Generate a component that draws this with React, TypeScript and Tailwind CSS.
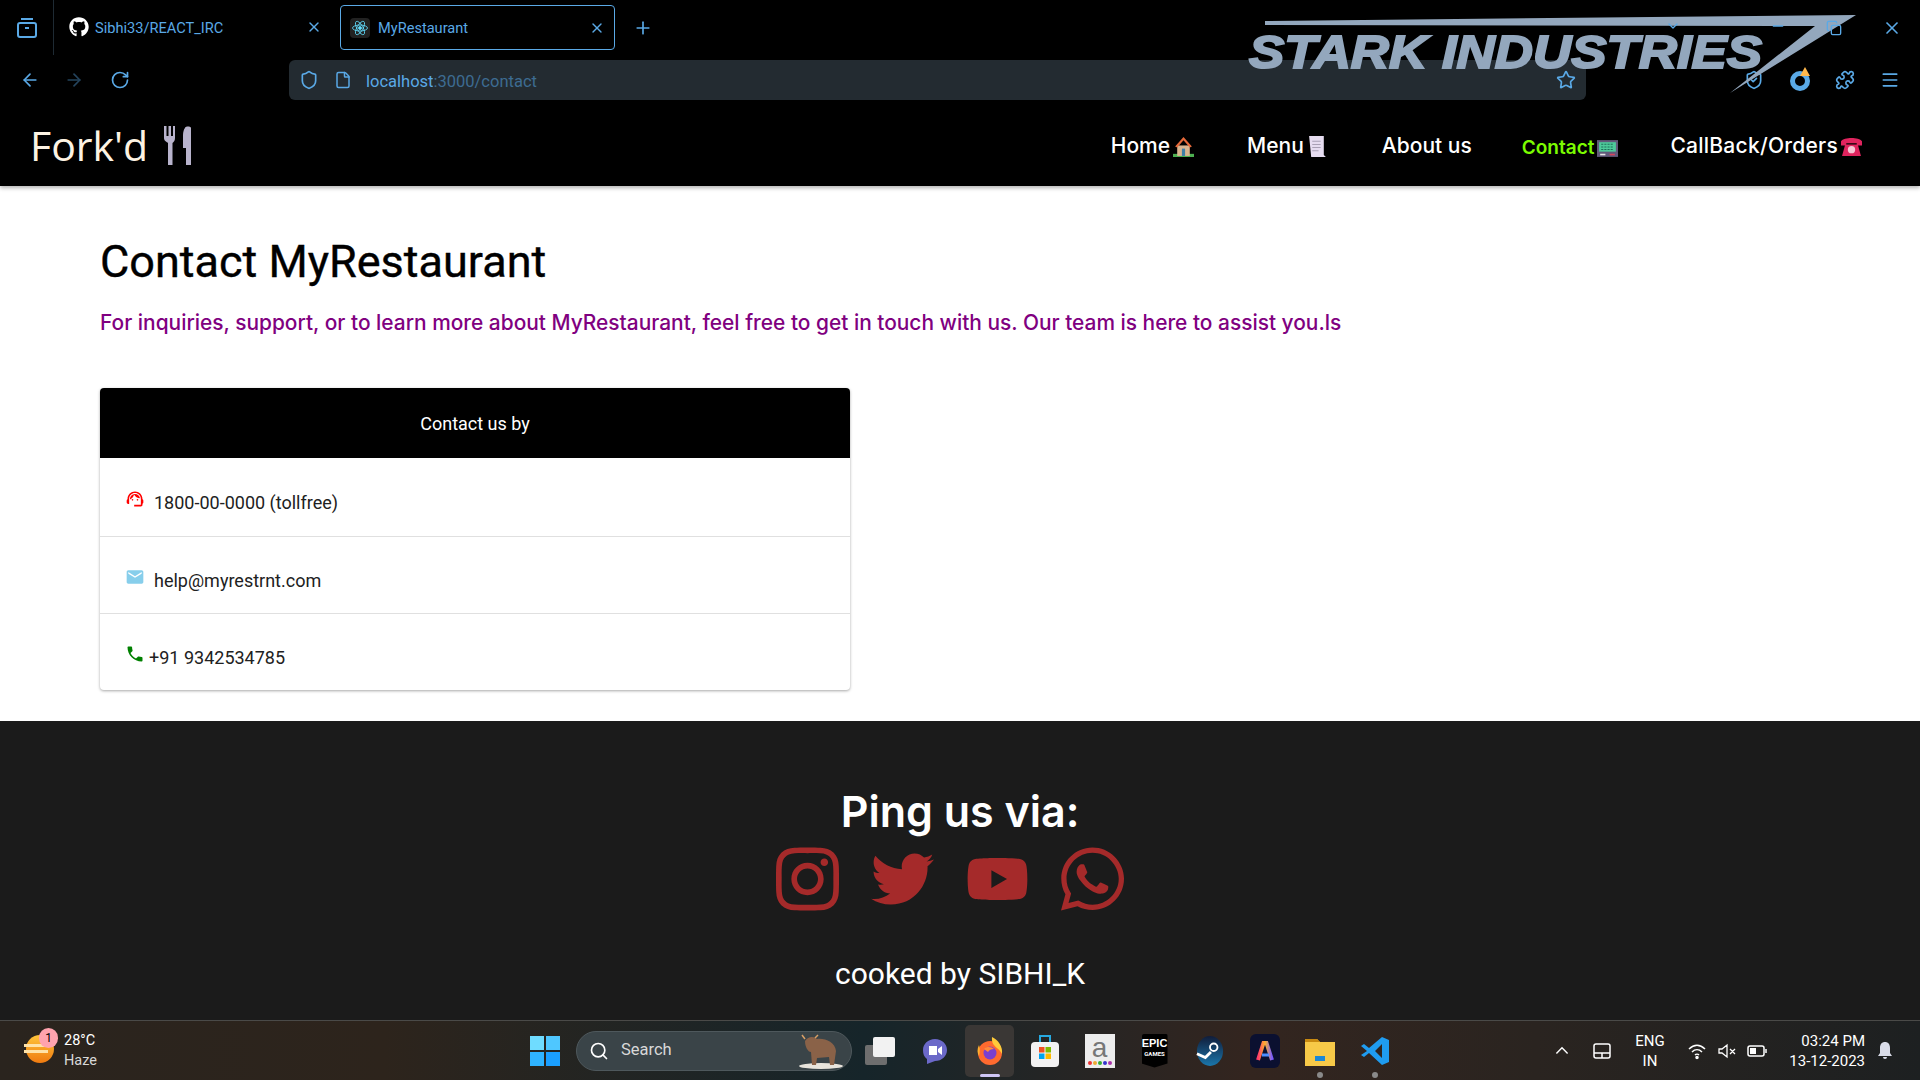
import { ArrowLeft, ArrowRight, ChevronDown, Copy, File, Menu, Minus, Plus, Puzzle, RotateCw, Search, Shield, ShieldCheck, Star, X } from "lucide-react";
import { FaGithub, FaInstagram, FaTwitter, FaWhatsapp, FaYoutube } from "react-icons/fa";

const poppins = "font-['Inter','Open_Sans',sans-serif]";

function ReactLogo() {
  return (
    <svg viewBox="0 0 24 24" className="w-5 h-5 bg-[#222] rounded-sm" fill="none" stroke="#61dafb" strokeWidth="1">
      <circle cx="12" cy="12" r="1.8" fill="#61dafb" />
      <ellipse cx="12" cy="12" rx="9" ry="3.6" />
      <ellipse cx="12" cy="12" rx="9" ry="3.6" transform="rotate(60 12 12)" />
      <ellipse cx="12" cy="12" rx="9" ry="3.6" transform="rotate(120 12 12)" />
    </svg>
  );
}

function HouseEmoji() {
  return (
    <svg viewBox="0 0 20 20" className="w-[21px] h-[21px]">
      <path d="M0 17h20v3H0z" fill="#4caf50" />
      <path d="M4 9h12v10H4z" fill="#d9b48f" />
      <path d="M10 1 2 10l2 1 6-7 6 7 2-1z" fill="#e5693a" />
      <path d="M8.500 12h3v7h-3z" fill="#3f7fa6" />
    </svg>
  );
}

function ScrollEmoji() {
  return (
    <svg viewBox="0 0 20 20" className="w-[21px] h-[21px]">
      <path d="M2 0h14v18l2 2H4z" fill="#e6dcf0" />
      <path d="M5 5h8M5 8h8M5 11h8M5 14h6" stroke="#a9a0b5" strokeWidth="1" />
    </svg>
  );
}

function ComputerEmoji() {
  return (
    <svg viewBox="0 0 20 20" className="w-[21px] h-[21px]">
      <path d="M0 2h20v16H0z" fill="#62597a" />
      <path d="M2 4h16v9H2z" fill="#4ecb9b" />
      <path d="M4 6h12M4 8.500h12M4 11h12" stroke="#1f6f5a" strokeWidth="1" strokeDasharray="2 1" />
      <path d="M3 15h5v1.500H3z" fill="#e8e8e8" />
      <path d="M12 15h5v1.500h-5z" fill="#d6455d" />
    </svg>
  );
}

function TelephoneEmoji() {
  return (
    <svg viewBox="0 0 20 20" className="w-[21px] h-[21px]">
      <path d="M0 5c3-4 17-4 20 0v4h-5V7H5v2H0z" fill="#e0245e" />
      <path d="M4 8h12l3 11H1z" fill="#e0245e" />
      <circle cx="10" cy="13" r="3.500" fill="#f7c6d5" />
    </svg>
  );
}

function NavLink({ label, emoji, className }: { label: string; emoji?: React.ReactNode; className?: string }) {
  return (
    <div className={`flex items-center gap-[3px] font-medium ${className ?? "text-white"}`}>
      <span>{label}</span>
      {emoji}
    </div>
  );
}

function ContactRow({ icon, text, last, gap, h }: { icon: React.ReactNode; text: string; last?: boolean; gap: string; h: string }) {
  return (
    <div className={`flex items-center pl-[26px] text-[#212121] text-[18px] ${h} ${gap} ${last ? "" : "border-b border-[#e0e0e0]"}`}>
      <span className="mt-1 w-[17px] h-[17px] flex items-center justify-center">{icon}</span>
      <span className="pt-[11px]">{text}</span>
    </div>
  );
}

function TrayApp({ children, dot }: { children: React.ReactNode; dot?: boolean }) {
  return (
    <div className="relative w-[55px] h-[60px] flex items-center justify-center">
      {children}
      {dot && <span className="absolute bottom-[3px] w-[6px] h-[6px] rounded-full bg-[#8a8a8a]" />}
    </div>
  );
}

export default function App() {
  return (
    <div className="relative w-[1920px] h-[1080px] overflow-hidden bg-white flex flex-col font-['Roboto',sans-serif]">
      {/* browser chrome */}
      <div className="bg-black h-[108px] flex flex-col text-[#5aa9e6]">
        <div className="h-[55px] flex items-center">
          <div className="w-[54px] h-[55px] flex items-center justify-center border-r border-[#1e2a33]">
            <svg viewBox="0 0 24 24" className="w-6 h-6" fill="none" stroke="currentColor" strokeWidth="2">
              <path d="M6 3h12" />
              <rect x="3" y="7" width="18" height="14" rx="2" />
              <path d="M10 12h4" />
            </svg>
          </div>
          <div className="w-[286px] flex items-center pl-[15px] pr-[18px] text-[14.6px]">
            <FaGithub className="text-white w-5 h-5 mr-[6px]" />
            <span className="pt-[3px]">Sibhi33/REACT_IRC</span>
            <X className="ml-auto w-4 h-4" />
          </div>
          <div className="w-[275px] h-[45px] flex items-center border border-[#5aa9e6] rounded-[4px] px-[9px] text-[14.6px]">
            <ReactLogo />
            <span className="ml-2 pt-[3px]">MyRestaurant</span>
            <X className="ml-auto w-4 h-4" />
          </div>
          <Plus className="w-5 h-5 ml-[18px]" />
        </div>
        <div className="h-[53px] pb-[3px] flex items-center">
          <ArrowLeft className="w-5 h-5 ml-[20px]" />
          <ArrowRight className="w-5 h-5 ml-[24px] opacity-40" />
          <RotateCw className="w-5 h-5 ml-[26px]" />
          <div className="ml-[159px] w-[1297px] h-10 bg-[#232b31] rounded-[6px] flex items-center px-[10px] text-[16.5px]">
            <Shield className="w-5 h-5" />
            <File className="w-[18px] h-[18px] ml-[15px]" />
            <span className="ml-[14px] pt-[4px]">localhost</span>
            <span className="pt-[4px] text-[#3d6c92]">:3000/contact</span>
            <Star className="w-5 h-5 ml-auto" />
          </div>
          <ShieldCheck className="w-5 h-5 absolute left-[1744px] top-[70px]" />
          <div className="absolute left-[1790px] top-[71px] w-5 h-5 rounded-full border-[5px] border-[#5aa9e6]">
            <span className="absolute -top-[9px] left-[5px] w-0 h-0 border-x-[5px] border-x-transparent border-b-[9px] border-b-[#ffb84d]" />
          </div>
          <Puzzle className="w-5 h-5 absolute left-[1835px] top-[70px]" />
          <Menu className="w-5 h-5 absolute left-[1880px] top-[70px]" />
        </div>
      </div>

      {/* logo sticker over the chrome */}
      <div className="absolute left-[1249px] top-[28px] text-[47px] leading-[47px] font-bold italic text-[#93a7bd] [-webkit-text-stroke:2px_#93a7bd] font-['Liberation_Sans',sans-serif] whitespace-nowrap origin-left scale-x-[1.125]">
        STARK INDUSTRIES
      </div>
      <svg viewBox="0 0 640 90" className="absolute left-[1225px] top-[12px] w-[640px] h-[90px]">
        <path d="M40 9 631 3 505 81 590 14 40 13z" fill="#93a7bd" />
      </svg>
      <ChevronDown className="absolute left-[1665px] top-[18px] w-4 h-4 text-[#5aa9e6]" />
      <Minus className="absolute left-[1770px] top-[18px] w-4 h-4 text-[#5aa9e6]" />
      <Copy className="absolute left-[1826px] top-[20px] w-4 h-4 text-[#5aa9e6]" />
      <X className="absolute left-[1882px] top-[18px] w-5 h-5 text-[#5aa9e6]" />

      {/* navbar */}
      <nav className={`h-[78px] bg-black flex items-center pl-[30px] pr-[58px] shadow-[0_2px_4px_rgba(0,0,0,0.3)] ${poppins}`}>
        <div className="flex items-center gap-[15px] text-[41px] text-[#fdf3e3] font-['Open_Sans',sans-serif] -mt-[2px]">
          Fork'd
          <svg viewBox="0 0 30 40" className="w-[32px] h-[40px]" fill="#b8b3cc">
            <path d="M0 0h2.500v10h2V0h2.500v10h2V0h2v12c0 3-1.500 4-2.500 5v22h-4.500V17C3 16 0 15 0 12z" />
            <path d="M21 2c0-2 6-2 6 0v37h-5V22h-3V9c0-3 1-6 2-7z" />
          </svg>
        </div>
        <div className="ml-auto flex items-center text-[21px] -mt-[2px]">
          <NavLink label="Home" emoji={<HouseEmoji />} />
          <NavLink label="Menu" emoji={<ScrollEmoji />} className="text-white ml-[53px]" />
          <NavLink label="About us" className="text-white ml-[54px]" />
          <NavLink label="Contact" emoji={<ComputerEmoji />} className="text-[#7cfc00] ml-[50px] mt-1 font-semibold text-[19px]" />
          <NavLink label="CallBack/Orders" emoji={<TelephoneEmoji />} className="text-white ml-[52px] tracking-[0.25px]" />
        </div>
      </nav>

      {/* main */}
      <main className="flex-1 px-[100px] pt-[50px]">
        <h1 className="text-[45px] leading-[52px] font-[450] [-webkit-text-stroke:0.4px_black] text-black">Contact MyRestaurant</h1>
        <p className={`mt-[20px] text-[20.9px] leading-[30px] font-medium text-[#800080] ${poppins}`}>
          For inquiries, support, or to learn more about MyRestaurant, feel free to get in touch with us. Our team is here to assist you.ls
        </p>
        <div className="mt-[50px] w-[750px] rounded-[4px] overflow-hidden shadow-[0_1px_3px_rgba(0,0,0,0.35)]">
          <div className="h-[70px] bg-black text-white text-[18px] font-[450] flex items-center justify-center">Contact us by</div>
          <ContactRow
            h="h-[79px]"
            gap="gap-[11px]"
            text="1800-00-0000 (tollfree)"
            icon={
              <svg viewBox="0 0 24 24" className="w-5 h-5 shrink-0" fill="#f00">
                <path d="M21 12.220C21 6.730 16.740 3 12 3c-4.690 0-9 3.650-9 9.280-.6.340-1 .980-1 1.720v2c0 1.100.9 2 2 2h1v-6.100c0-3.870 3.130-7 7-7s7 3.130 7 7V19h-8v2h8c1.100 0 2-.9 2-2v-1.220c.59-.31 1-.92 1-1.610v-2.300c0-.67-.41-1.280-1-1.650z" />
                <circle cx="9" cy="13" r="1" />
                <circle cx="15" cy="13" r="1" />
                <path d="M18 11.030C17.520 8.180 15.040 6 12.050 6c-3.030 0-6.290 2.510-6.030 6.450 2.470-1.010 4.330-3.210 4.860-5.890 1.310 2.630 4 4.440 7.120 4.470z" />
              </svg>
            }
          />
          <ContactRow
            h="h-[77px]"
            gap="gap-[11px]"
            text="help@myrestrnt.com"
            icon={
              <svg viewBox="0 0 24 24" className="w-5 h-5 shrink-0" fill="#87ceeb">
                <path d="M20 4H4c-1.100 0-1.990.9-1.990 2L2 18c0 1.100.9 2 2 2h16c1.100 0 2-.9 2-2V6c0-1.100-.9-2-2-2zm0 4l-8 5-8-5V6l8 5 8-5v2z" />
              </svg>
            }
          />
          <ContactRow
            h="h-[76px]"
            last
            gap="gap-[6px]"
            text="+91 9342534785"
            icon={
              <svg viewBox="0 0 24 24" className="w-5 h-5 shrink-0" fill="#008000">
                <path d="M6.620 10.790c1.440 2.830 3.760 5.140 6.590 6.590l2.200-2.200c.27-.27.67-.36 1.020-.24 1.120.37 2.330.57 3.570.57.55 0 1 .45 1 1V20c0 .55-.45 1-1 1-9.390 0-17-7.610-17-17 0-.55.45-1 1-1h3.500c.55 0 1 .45 1 1 0 1.250.2 2.450.57 3.570.11.35.03.74-.25 1.020l-2.200 2.200z" />
              </svg>
            }
          />
        </div>
      </main>

      {/* footer */}
      <footer className="h-[299px] bg-[#1b1b1b] flex flex-col items-center text-white">
        <div className={`mt-[62px] text-[43px] leading-[56px] font-semibold ${poppins}`}>Ping us via:</div>
        <div className="mt-[8px] pr-[20px] flex items-center gap-[32px] text-[#a52a2a]">
          <FaInstagram viewBox="0 32 448 448" className="w-[63px] h-[64px]" />
          <FaTwitter className="w-[63px] h-[64px]" />
          <FaYoutube className="w-[63px] h-[64px]" />
          <FaWhatsapp viewBox="0 32 448 448" className="w-[63px] h-[64px]" />
        </div>
        <div className="mt-[41px] text-[30px] leading-[44px]">cooked by SIBHI_K</div>
      </footer>

      {/* windows taskbar */}
      <div className="h-[60px] border-t border-[#4a4a48] bg-[linear-gradient(90deg,#2a241e_0%,#2d241c_20%,#16252a_45%,#33251f_65%,#2a2420_80%,#1d2021_100%)] flex items-center text-white relative">
        <div className="absolute left-[26px] top-[14px] w-[28px] h-[28px] rounded-full bg-[linear-gradient(180deg,#ffc53a,#ef7a10)]" />
        <div className="absolute left-[24px] top-[23px] w-[26px] h-[3px] bg-[#ffe3a8]" />
        <div className="absolute left-[24px] top-[29px] w-[24px] h-[3px] bg-[#ffe3a8]" />
        <div className="absolute left-[39px] top-[7px] w-[19px] h-[20px] rounded-full bg-[#ffa3ae] text-[12px] text-black flex items-center justify-center">1</div>
        <div className="ml-[64px] text-[14.5px] leading-[20px]">
          <div>28°C</div>
          <div className="text-[#d8d8d8]">Haze</div>
        </div>
        <div className="ml-[433px] w-[30px] h-[30px] grid grid-cols-2 gap-[2px]">
          <span className="bg-[#6fdcff]" />
          <span className="bg-[#4fc7ff]" />
          <span className="bg-[#2fb3ff]" />
          <span className="bg-[#1a9fff]" />
        </div>
        <div className="ml-[16px] w-[276px] h-10 rounded-full bg-[#3a4448] border border-[#4e585c] flex items-center pl-[12px]">
          <Search className="w-5 h-5" />
          <span className="ml-[12px] text-[16.5px] text-[#d8d8d8]">Search</span>
          <svg viewBox="0 0 50 36" className="ml-auto mr-[8px] w-[50px] h-[36px]">
            <ellipse cx="28" cy="33" rx="22" ry="3" fill="#e8e4dc" />
            <path d="M12 8c3-5 9-5 12-2 8-1 18 3 19 12l-2 14h-4l-1-8-12 1-1 7h-4l-1-13c-3 0-6-5-6-11z" fill="#8a6248" />
            <path d="M12 6l-3-4M22 5l3-3" stroke="#d9a066" strokeWidth="1.500" />
          </svg>
        </div>
        <TrayApp>
          <div className="relative w-[30px] h-[28px]">
            <span className="absolute left-0 bottom-0 w-[22px] h-[20px] bg-[#6e6e6e] rounded-[2px]" />
            <span className="absolute right-0 top-0 w-[22px] h-[20px] bg-[#f2f2f2] rounded-[2px]" />
          </div>
        </TrayApp>
        <TrayApp>
          <svg viewBox="0 0 30 30" className="w-[30px] h-[30px]">
            <path d="M15 3c7 0 12 5 12 11s-5 11-12 11l-8 3v-5C4 21 3 18 3 14 3 8 8 3 15 3z" fill="#6b69c9" />
            <path d="M9 10h8v9H9zM18 13l4-3v9l-4-3z" fill="#fff" />
          </svg>
        </TrayApp>
        <div className="relative w-[55px] h-[60px] flex items-center justify-center">
          <div className="absolute inset-x-[3px] top-[4px] bottom-[4px] bg-[#3a3735] rounded-[5px]" />
          <svg viewBox="0 0 30 30" className="relative w-[30px] h-[30px]">
            <circle cx="15" cy="17" r="12" fill="#ff6a2f" />
            <path d="M17 1c6 3 11 9 10 17-3-7-11-7-10-17z" fill="#ffca3a" />
            <path d="M4 9c-2 4-2 8 0 11 1-4 1-8 0-11z" fill="#ffb02e" />
            <circle cx="15" cy="17" r="6.500" fill="#7a3fd0" />
            <path d="M9 13c3-3 8-2 10 0-3 0-5 1-6 3z" fill="#ff8a3a" />
          </svg>
          <span className="absolute bottom-[4px] w-5 h-[3px] rounded-sm bg-[#cfc6f5]" />
        </div>
        <TrayApp>
          <svg viewBox="0 0 30 34" className="w-[30px] h-[34px]">
            <rect x="1" y="8" width="28" height="25" rx="4" fill="#f2f2f2" />
            <path d="M10 8V2h10v6" fill="none" stroke="#27a9e0" strokeWidth="2" />
            <path d="M9 13h5.500v5.500H9z" fill="#f25022" />
            <path d="M15.500 13H21v5.500h-5.500z" fill="#7fba00" />
            <path d="M9 19.500h5.500V25H9z" fill="#00a4ef" />
            <path d="M15.500 19.500H21V25h-5.500z" fill="#ffb900" />
          </svg>
        </TrayApp>
        <TrayApp>
          <div className="w-[30px] h-[34px] bg-[#ededed] flex flex-col items-center text-[28px] leading-[27px] text-[#777] font-['Liberation_Sans',sans-serif]">
            a
            <span className="flex gap-[1px]">
              <i className="w-1 h-1 rounded-full bg-[#e33]" />
              <i className="w-1 h-1 rounded-full bg-[#ea3]" />
              <i className="w-1 h-1 rounded-full bg-[#3a3]" />
              <i className="w-1 h-1 rounded-full bg-[#33c]" />
              <i className="w-1 h-1 rounded-full bg-[#a3a]" />
            </span>
          </div>
        </TrayApp>
        <TrayApp>
          <div className="w-[26px] h-[34px] bg-black text-white text-center font-bold pt-[2px] rounded-t-[2px] [clip-path:polygon(0_0,100%_0,100%_88%,50%_100%,0_88%)]">
            <div className="text-[11px] leading-[14px] font-['Liberation_Sans_Narrow','Liberation_Sans',sans-serif]">EPIC</div>
            <div className="text-[6px] leading-[8px]">GAMES</div>
          </div>
        </TrayApp>
        <TrayApp>
          <svg viewBox="0 0 30 34" className="w-[28px] h-[34px]">
            <defs>
              <linearGradient id="steamFill" x1="0" y1="0" x2="0" y2="1">
                <stop offset="0" stopColor="#111d3a" />
                <stop offset="1" stopColor="#1a76ab" />
              </linearGradient>
            </defs>
            <ellipse cx="15" cy="17" rx="14" ry="16" fill="url(#steamFill)" />
            <circle cx="19" cy="13" r="4" fill="none" stroke="#fff" strokeWidth="2" />
            <path d="M1 20l9 4 6-6" fill="none" stroke="#fff" strokeWidth="3" />
          </svg>
        </TrayApp>
        <TrayApp>
          <svg viewBox="0 0 30 34" className="w-[30px] h-[34px]">
            <defs>
              <linearGradient id="adobeA" x1="0" y1="0" x2="1" y2="0">
                <stop offset="0" stopColor="#ff3b6b" />
                <stop offset="0.5" stopColor="#ffb02e" />
                <stop offset="1" stopColor="#7a5cff" />
              </linearGradient>
            </defs>
            <rect width="30" height="34" rx="6" fill="#0b1030" />
            <path d="M8 26 13.500 9h3L22 26" fill="none" stroke="url(#adobeA)" strokeWidth="4" />
            <path d="M12 21h7" stroke="#4d8dff" strokeWidth="3" />
          </svg>
        </TrayApp>
        <TrayApp dot>
          <svg viewBox="0 0 30 30" className="w-[30px] h-[30px]">
            <path d="M0 3h12l3 3h15v24H0z" fill="#f7c948" />
            <path d="M0 3h12l3 3H0z" fill="#c98a10" />
            <path d="M10 20h10v5H10z" fill="#1b87d6" />
          </svg>
        </TrayApp>
        <TrayApp dot>
          <svg viewBox="0 0 30 30" className="w-[30px] h-[30px]">
            <path d="M22 1 29 4v22l-7 3L9 17l-5 4-3-2 6-4-6-5 3-2 5 4zm0 7-7 7 7 7z" fill="#1f9cf0" />
          </svg>
        </TrayApp>
        <div className="absolute right-0 top-0 h-full flex items-center text-[15px]">
          <svg viewBox="0 0 20 20" className="w-4 h-4" fill="none" stroke="#fff" strokeWidth="1.800"><path d="m3 13 7-7 7 7" /></svg>
          <svg viewBox="0 0 20 20" className="w-5 h-5 ml-[22px]" fill="none" stroke="#fff" strokeWidth="1.500"><rect x="2" y="3" width="16" height="14" rx="2" /><path d="M2 12h16M10 12v5" /></svg>
          <div className="ml-[18px] w-[40px] text-center leading-[20px]"><div>ENG</div><div>IN</div></div>
          <svg viewBox="0 0 20 20" className="w-5 h-5 ml-[17px]" fill="none" stroke="#fff" strokeWidth="1.500"><path d="M2 8c5-5 11-5 16 0M5 11c3-3 7-3 10 0M8 14c1-1 3-1 4 0" /><circle cx="10" cy="16.500" r="1" fill="#fff" /></svg>
          <svg viewBox="0 0 20 20" className="w-5 h-5 ml-[10px]" fill="none" stroke="#fff" strokeWidth="1.300"><path d="M2 8v4h3l5 4V4L5 8zM13 8l5 5M18 8l-5 5" /></svg>
          <svg viewBox="0 0 20 20" className="w-5 h-5 ml-[10px]" fill="none" stroke="#fff" strokeWidth="1.500"><rect x="1" y="5" width="16" height="10" rx="2" /><rect x="3" y="7" width="6" height="6" fill="#fff" stroke="none" /><path d="M19 8v4" /></svg>
          <div className="ml-[14px] w-[84px] text-right leading-[20px]"><div>03:24 PM</div><div>13-12-2023</div></div>
          <svg viewBox="0 0 20 20" className="w-5 h-5 ml-[10px] mr-[25px]" fill="#d9dce8"><path d="M10 1c3 0 5 2 5 6v5l2 3H3l2-3V7c0-4 2-6 5-6zM8 16h4a2 2 0 0 1-4 0z" /></svg>
        </div>
      </div>
    </div>
  );
}
